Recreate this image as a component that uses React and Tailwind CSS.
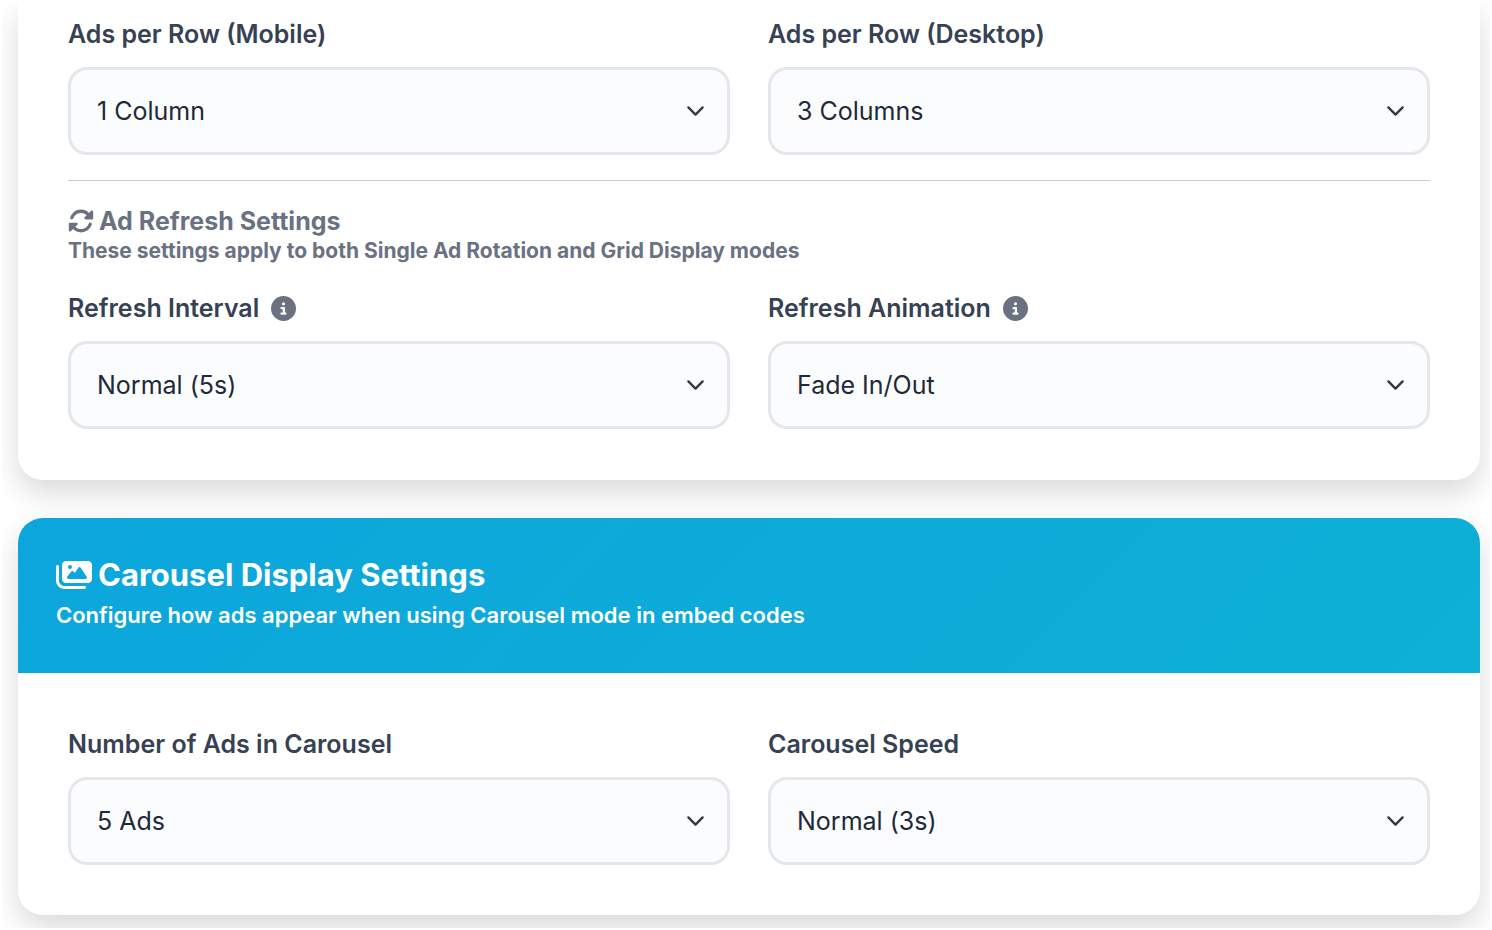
import { useState } from "react";
import { FaCircleInfo, FaImages, FaRotate } from "react-icons/fa6";

const FONT = "font-['Inter','Liberation_Sans',sans-serif]";

function SelectField({ id, label, options, initial, info }) {
    const [value, setValue] = useState(initial);

    return (
        <div className="min-w-0">
            <div className="flex items-center gap-3 h-[30px] mb-[18px]">
                <label htmlFor={id} className="text-[25px] leading-[30px] font-semibold text-gray-700">
                    {label}
                </label>
                {info && (
                    <button type="button" title={info} aria-label={info} className="text-gray-500">
                        <FaCircleInfo className="size-[25px]" />
                    </button>
                )}
            </div>
            <div className="relative">
                <select
                    id={id}
                    value={value}
                    onChange={(e) => setValue(e.target.value)}
                    className="block w-full h-[88px] appearance-none rounded-[19px] border-3 border-[#e5e7eb] bg-[#fbfcfe] pl-[26px] pr-16 pt-[2px] text-[25px] text-gray-800 outline-none focus:border-sky-500"
                >
                    {options.map((o) => (
                        <option key={o} value={o}>{o}</option>
                    ))}
                </select>
                <svg
                    viewBox="0 0 16 16"
                    className="pointer-events-none absolute right-[25px] top-1/2 size-[19px] -translate-y-1/2"
                    fill="none"
                    stroke="#343a40"
                    strokeWidth="2"
                    strokeLinecap="round"
                    strokeLinejoin="round"
                >
                    <path d="m2 5 6 6 6-6" />
                </svg>
            </div>
        </div>
    );
}

export default function App() {
    return (
        <div className={`bg-white p-[2px] ${FONT}`}>
            <main className="overflow-hidden pl-4 pr-[10px] pb-[13px]">
                {/* Grid + refresh settings */}
                <section className="rounded-b-[25px] bg-white px-[50px] pt-[17px] pb-[51px] shadow-[0_13px_30px_rgba(0,0,0,0.15)]">
                    <div className="grid grid-cols-2 gap-[38px]">
                        <SelectField
                            id="rowMobile"
                            label="Ads per Row (Mobile)"
                            initial="1 Column"
                            options={["1 Column", "2 Columns"]}
                        />
                        <SelectField
                            id="rowDesktop"
                            label="Ads per Row (Desktop)"
                            initial="3 Columns"
                            options={["2 Columns", "3 Columns", "4 Columns"]}
                        />
                    </div>

                    <hr className="mt-[25px] mb-6 border-t border-[#c8cacd]" />

                    <h6 className="flex items-center gap-[5px] text-[25px] leading-8 font-bold text-gray-500">
                        <FaRotate className="size-[26px]" />
                        Ad Refresh Settings
                    </h6>
                    <p className="text-[21px] leading-7 font-bold text-gray-500">
                        These settings apply to both Single Ad Rotation and Grid Display modes
                    </p>

                    <div className="mt-7 grid grid-cols-2 gap-[38px]">
                        <SelectField
                            id="refreshInterval"
                            label="Refresh Interval"
                            info="How often the ads change"
                            initial="Normal (5s)"
                            options={["Fast (3s)", "Normal (5s)", "Slow (10s)"]}
                        />
                        <SelectField
                            id="refreshAnimation"
                            label="Refresh Animation"
                            info="Effect used when the ads change"
                            initial="Fade In/Out"
                            options={["Fade In/Out", "Slide", "None"]}
                        />
                    </div>
                </section>

                {/* Carousel settings */}
                <section className="mt-[38px] rounded-[25px] bg-white shadow-[0_13px_30px_rgba(0,0,0,0.15)]">
                    <header className="rounded-t-[25px] bg-[linear-gradient(135deg,#0ca6dc,#0eb0d6)] px-[38px] pt-[37px] pb-[44px] text-white">
                        <h5 className="flex items-center gap-[6px] text-[31px] leading-10 font-bold">
                            <FaImages className="size-9" />
                            Carousel Display Settings
                        </h5>
                        <p className="mt-[6px] text-[22px] leading-7 font-semibold">
                            Configure how ads appear when using Carousel mode in embed codes
                        </p>
                    </header>
                    <div className="grid grid-cols-2 gap-[38px] px-[50px] pt-14 pb-[50px]">
                        <SelectField
                            id="carouselCount"
                            label="Number of Ads in Carousel"
                            initial="5 Ads"
                            options={["3 Ads", "5 Ads", "10 Ads"]}
                        />
                        <SelectField
                            id="carouselSpeed"
                            label="Carousel Speed"
                            initial="Normal (3s)"
                            options={["Fast (2s)", "Normal (3s)", "Slow (5s)"]}
                        />
                    </div>
                </section>
            </main>
        </div>
    );
}
